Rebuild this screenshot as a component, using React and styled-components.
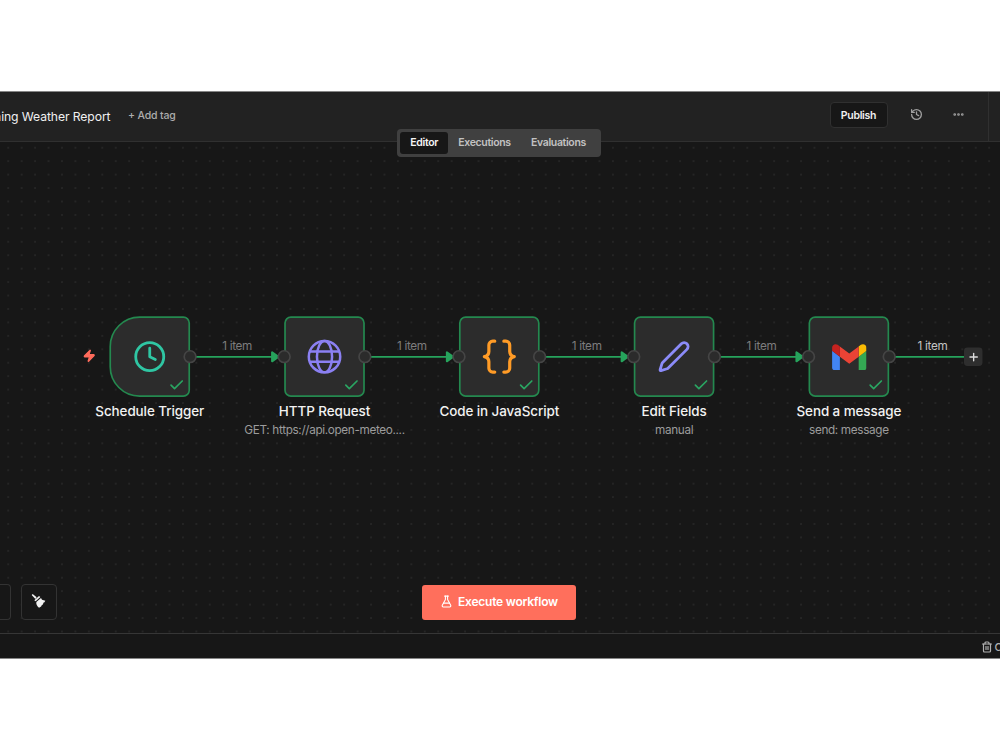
import React from "react";
import styled, { createGlobalStyle } from "styled-components";
import { Clock, Pen, Check, Zap, History, Ellipsis, FlaskConical, Trash2, Plus } from "lucide-react";

const ZOOM = 0.8403;
const NODE_SIZE = 96;
const NODE_STEP = 208;

const GlobeIcon = () => (
  <svg width="42" height="42" viewBox="0 0 42 42" fill="none" stroke="#8b80f2" strokeWidth="3">
    <circle cx="21" cy="21" r="18.7" />
    <ellipse cx="21" cy="21" rx="9" ry="18.7" />
    <path d="M3.2 15h35.6M3.2 27h35.6" />
  </svg>
);

const BracesIcon = () => (
  <svg
    width="42"
    height="42"
    viewBox="0 0 42 42"
    fill="none"
    stroke="#ff9b26"
    strokeWidth="3.8"
    strokeLinecap="round"
    strokeLinejoin="round"
  >
    <path d="M15.6 2.6h-2.4a4.6 4.6 0 0 0-4.6 4.6v7.6c0 3.4-2 5.4-5.4 6.2 3.4.8 5.4 2.8 5.4 6.2v7.6a4.6 4.6 0 0 0 4.6 4.6h2.4" />
    <path d="M26.4 2.6h2.4a4.6 4.6 0 0 1 4.6 4.6v7.6c0 3.4 2 5.4 5.4 6.2-3.4.8-5.4 2.8-5.4 6.2v7.6a4.6 4.6 0 0 1-4.6 4.6h-2.4" />
  </svg>
);

const GmailIcon = () => (
  <svg width="41" height="31" viewBox="52 42 88 66">
    <path fill="#4285f4" d="M58 108h14V74L52 59v43c0 3.32 2.69 6 6 6" />
    <path fill="#34a853" d="M120 108h14c3.32 0 6-2.69 6-6V59l-20 15" />
    <path fill="#fbbc04" d="M120 48v26l20-15v-8c0-7.42-8.47-11.65-14.4-7.2" />
    <path fill="#ea4335" d="M72 74V48l24 18 24-18v26L96 92" />
    <path fill="#c5221f" d="M52 51v8l20 15V48l-5.6-4.2c-5.94-4.45-14.4-.22-14.4 7.2" />
  </svg>
);

const BroomIcon = () => (
  <svg width="15" height="16" viewBox="0 0 45 48" fill="#f2f2f2">
    <path d="M2 6l3-3 12 10-4 5z" />
    <path d="M10 22l14-13 4 3-14 13z" />
    <path d="M16 27l14-12 3 5 10 3c-2 4-3 5-6 6 0 4-2 6-5 8-1 4-4 6-8 7-6-5-9-10-8-17z" />
  </svg>
);

const nodes = [
  { name: "Schedule Trigger", icon: <Clock size={40} color="#2fc6a3" />, trigger: true },
  { name: "HTTP Request", sub: "GET: https://api.open-meteo....", icon: <GlobeIcon /> },
  { name: "Code in JavaScript", icon: <BracesIcon /> },
  { name: "Edit Fields", sub: "manual", icon: <Pen size={40} color="#8b8bf8" /> },
  { name: "Send a message", sub: "send: message", icon: <GmailIcon /> },
];

const tabs = ["Editor", "Executions", "Evaluations"];

function Edge({ index, last }) {
  const x = index * NODE_STEP + NODE_SIZE;
  return (
    <g>
      <path d={`M${x + 7} 48.2H${x + (last ? 90 : 99)}`} stroke="#26a35c" strokeWidth="2.2" />
      {!last && (
        <path
          d={`M${x + 97.6} 42.8v10.8l7.6-5.4z`}
          fill="#26a35c"
          stroke="#26a35c"
          strokeWidth="2.4"
          strokeLinejoin="round"
        />
      )}
    </g>
  );
}

function FlowNode({ node, index }) {
  return (
    <NodeWrap $x={index * NODE_STEP}>
      <NodeBox $trigger={node.trigger}>
        {node.icon}
        <Status>
          <Check size={20} strokeWidth={2.4} />
        </Status>
      </NodeBox>
      {!node.trigger && <Handle $side="left" />}
      <Handle $side="right" />
      {node.trigger && (
        <Bolt>
          <Zap size={16} fill="currentColor" />
        </Bolt>
      )}
      <NodeName>{node.name}</NodeName>
      {node.sub && <NodeSub>{node.sub}</NodeSub>}
    </NodeWrap>
  );
}

function App() {
  return (
    <>
      <GlobalStyle />
      <Window>
        <Header>
          <Title>ning Weather Report</Title>
          <AddTag>+ Add tag</AddTag>
          <Actions>
            <Publish>Publish</Publish>
            <History size={13} strokeWidth={2.4} />
            <Ellipsis size={13} strokeWidth={3} />
          </Actions>
          <SideStub />
          <Tabs>
            {tabs.map((tab, i) => (
              <Tab key={tab} $active={i === 0}>
                {tab}
              </Tab>
            ))}
          </Tabs>
        </Header>
        <Canvas>
          <Viewport>
            <EdgeLayer width="1060" height="96">
              {nodes.map((node, i) => (
                <Edge key={node.name} index={i} last={i === nodes.length - 1} />
              ))}
            </EdgeLayer>
            {nodes.map((node, i) => (
              <FlowNode key={node.name} node={node} index={i} />
            ))}
            {nodes.map((node, i) => {
              const last = i === nodes.length - 1;
              return (
                <EdgeLabel key={node.name} $x={i * NODE_STEP + (last ? 147.5 : 152)} $bright={last}>
                  1 item
                </EdgeLabel>
              );
            })}
            <AddNode>
              <Plus size={15} strokeWidth={2.6} />
            </AddNode>
          </Viewport>
          <Controls>
            <ControlStub />
            <ControlButton>
              <BroomIcon />
            </ControlButton>
            <Execute>
              <FlaskConical size={13} />
              Execute workflow
            </Execute>
          </Controls>
        </Canvas>
        <Footer>
          <Trash2 size={12} strokeWidth={2.4} />
          <span>C</span>
        </Footer>
      </Window>
    </>
  );
}

export default App;

const GlobalStyle = createGlobalStyle`
  * {
    box-sizing: border-box;
  }
  body {
    margin: 0;
    background: #fff;
    font-family: Inter, "Liberation Sans", sans-serif;
    overflow: hidden;
  }
  svg {
    flex-shrink: 0;
  }
`;

const Window = styled.div`
  display: flex;
  flex-direction: column;
  width: 1000px;
  height: 568px;
  margin-top: 91px;
  border-top: 1px solid #868686;
  border-bottom: 1px solid #868686;
  background: #171717;
  overflow: hidden;
`;

const Header = styled.header`
  position: relative;
  z-index: 1;
  display: flex;
  align-items: center;
  flex-shrink: 0;
  height: 50px;
  padding-bottom: 3px;
  background: #222;
  border-bottom: 1px solid #303030;
`;

const Title = styled.div`
  display: flex;
  justify-content: flex-end;
  width: 110.5px;
  padding-top: 2px;
  font-size: 12.2px;
  letter-spacing: -0.1px;
  color: #f0f0f0;
  white-space: nowrap;
`;

const AddTag = styled.div`
  margin-left: 17.5px;
  font-size: 10.5px;
  letter-spacing: -0.15px;
  font-weight: 500;
  color: #adadad;
`;

const Actions = styled.div`
  display: flex;
  align-items: center;
  margin-left: auto;
  color: #a0a0a0;
  svg {
    margin: 0 29.5px 1px 0;
  }
  svg:last-child {
    margin-right: 23px;
  }
`;

const Publish = styled.button`
  width: 58px;
  height: 26px;
  margin-right: 22px;
  padding: 0;
  border: 1px solid #303030;
  border-radius: 4px;
  background: #171717;
  color: #f0f0f0;
  font: 600 10.5px Inter, sans-serif;
  letter-spacing: -0.3px;
`;

const SideStub = styled.div`
  width: 12px;
  height: 50px;
  margin-bottom: -3px;
  border-left: 1px solid #303030;
`;

/* sits across the lower edge of the header */
const Tabs = styled.div`
  position: absolute;
  top: 37px;
  left: 397px;
  display: flex;
  width: 204px;
  height: 28px;
  padding: 3px;
  border-radius: 4px;
  background: #404040;
`;

const Tab = styled.div`
  display: flex;
  align-items: center;
  padding: 0 10px 2px 10.3px;
  border-radius: 3px;
  font-size: 10.5px;
  letter-spacing: -0.35px;
  font-weight: 600;
  background: ${(props) => (props.$active ? "#171717" : "transparent")};
  color: ${(props) => (props.$active ? "#f5f5f5" : "#c2c2c2")};
`;

const Canvas = styled.main`
  position: relative;
  flex: 1;
  display: flex;
  flex-direction: column;
  justify-content: flex-end;
  background-image: radial-gradient(circle, #272727 0.6px, transparent 1.2px);
  background-size: 13.445px 13.445px;
  background-position: 1.5px -1px;
  overflow: hidden;
`;

const Viewport = styled.div`
  position: absolute;
  top: 0;
  left: 0;
  transform-origin: 0 0;
  transform: translate(109.4px, 174.3px) scale(${ZOOM});
`;

const EdgeLayer = styled.svg`
  position: absolute;
  top: 0;
  left: 0;
`;

const NodeWrap = styled.div`
  position: absolute;
  top: 0;
  left: ${(props) => props.$x}px;
  display: flex;
  flex-direction: column;
  align-items: center;
  width: ${NODE_SIZE}px;
`;

const NodeBox = styled.div`
  position: relative;
  display: flex;
  align-items: center;
  justify-content: center;
  flex-shrink: 0;
  width: ${NODE_SIZE}px;
  height: ${NODE_SIZE}px;
  border: 2px solid #24894f;
  border-radius: ${(props) => (props.$trigger ? "36px 8px 8px 36px" : "8px")};
  background: #2c2c2c;
`;

const Status = styled.div`
  position: absolute;
  right: 4px;
  bottom: 2px;
  display: flex;
  color: #2aa562;
`;

const Handle = styled.div`
  position: absolute;
  top: 40px;
  ${(props) => props.$side}: -8px;
  width: 16px;
  height: 16px;
  border: 2px solid #454545;
  border-radius: 50%;
  background: #2b2b2b;
`;

const Bolt = styled.div`
  position: absolute;
  top: 39px;
  left: -32px;
  display: flex;
  color: #ff6b5b;
`;

const NodeName = styled.div`
  margin-top: 7px;
  font-size: 16px;
  letter-spacing: -0.1px;
  line-height: 20px;
  font-weight: 500;
  color: #f2f2f2;
  white-space: nowrap;
`;

const NodeSub = styled.div`
  margin-top: 3px;
  font-size: 14px;
  letter-spacing: -0.42px;
  line-height: 18px;
  color: #9c9c9c;
  white-space: nowrap;
`;

const EdgeLabel = styled.div`
  position: absolute;
  top: 26px;
  left: ${(props) => props.$x}px;
  transform: translateX(-50%);
  font-size: 14px;
  letter-spacing: -0.4px;
  line-height: 18px;
  color: ${(props) => (props.$bright ? "#c4c4c4" : "#7d7d7d")};
  white-space: nowrap;
`;

const AddNode = styled.div`
  position: absolute;
  top: 37px;
  left: 1017px;
  display: flex;
  align-items: center;
  justify-content: center;
  width: 22px;
  height: 22px;
  border-radius: 4px;
  background: #2e2e2e;
  color: #dcdcdc;
`;

const Controls = styled.div`
  display: flex;
  align-items: center;
  height: 36px;
  margin-bottom: 13px;
`;

const ControlStub = styled.div`
  width: 11px;
  height: 36px;
  border: 1px solid #333;
  border-left: none;
  border-radius: 0 4px 4px 0;
  background: #171717;
`;

const ControlButton = styled.div`
  display: flex;
  align-items: center;
  justify-content: center;
  width: 36px;
  height: 36px;
  margin-left: 10px;
  padding: 0 2px 2px 0;
  border: 1px solid #333;
  border-radius: 4px;
  background: #171717;
`;

const Execute = styled.button`
  display: flex;
  align-items: center;
  justify-content: center;
  gap: 5px;
  width: 154px;
  height: 35px;
  margin-left: 365px;
  padding: 0 0 1px;
  border: none;
  border-radius: 3px;
  background: #ff6f5c;
  color: #fff;
  font: 600 12px Inter, sans-serif;
  letter-spacing: -0.22px;
`;

const Footer = styled.footer`
  display: flex;
  align-items: center;
  flex-shrink: 0;
  gap: 2px;
  height: 25px;
  padding: 2px 0 0 980.5px;
  border-top: 1px solid #363636;
  font-size: 11px;
  font-weight: 500;
  color: #b0b0b0;
`;
